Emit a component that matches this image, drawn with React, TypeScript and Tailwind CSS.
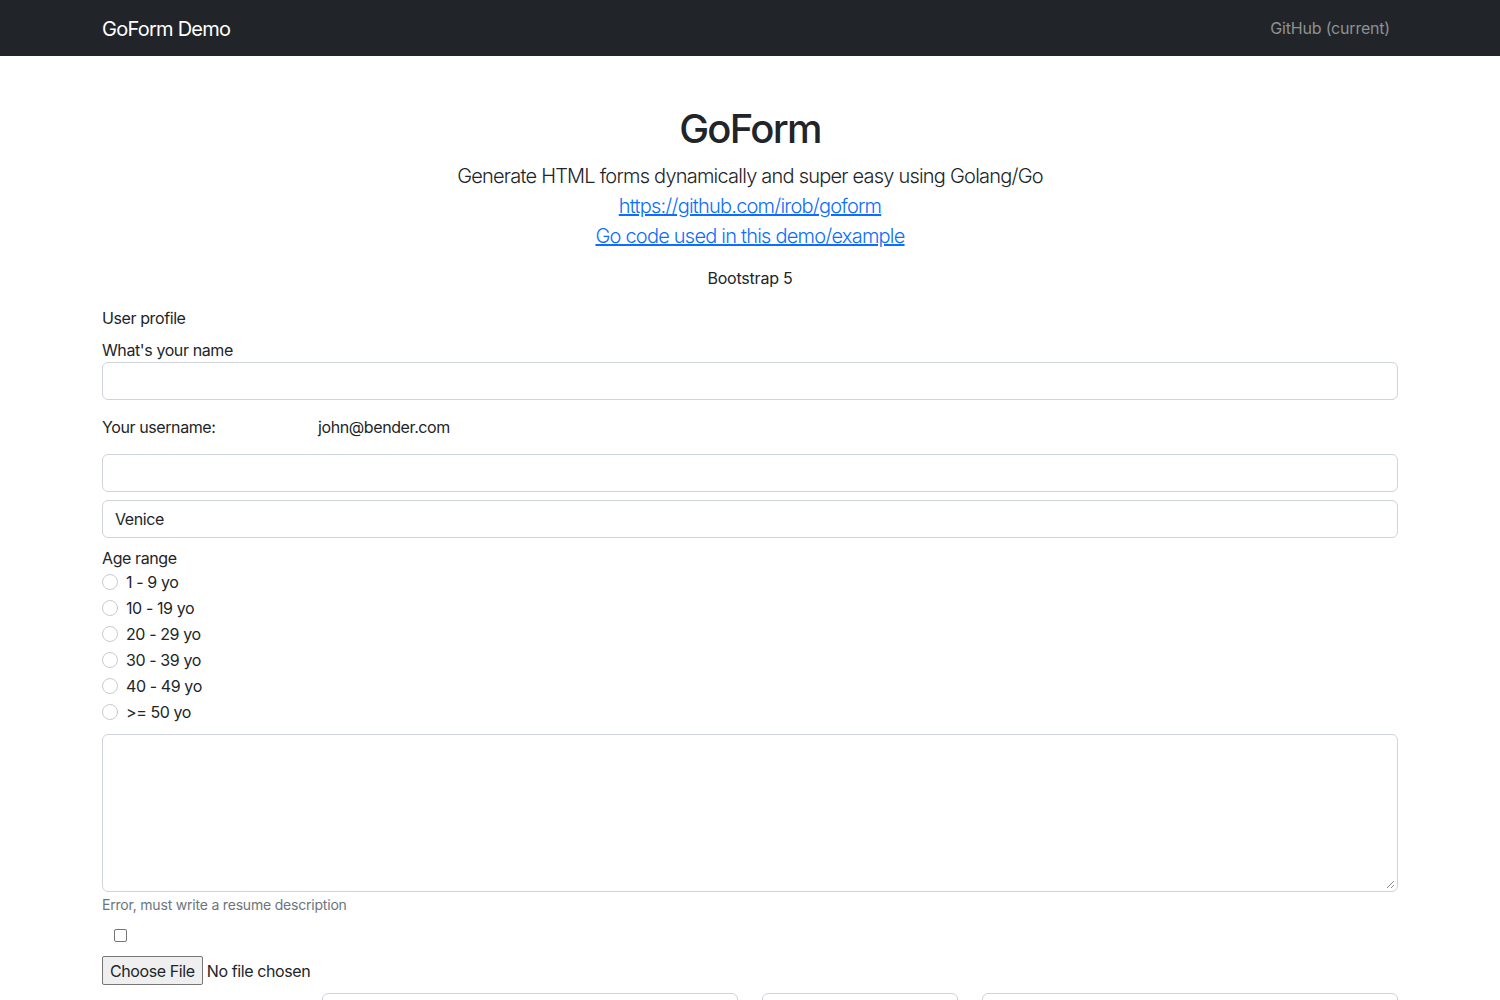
import React from "react";

const font = { fontFamily: "Inter, 'Liberation Sans', sans-serif" };

function Radio({ label }: { label: string }) {
  return (
    <div className="flex items-center h-6 mb-[2px]">
      <span className="w-4 h-4 rounded-full border border-[#c9cbce] bg-white shrink-0" />
      <span className="ml-2 text-[16px] leading-6 text-[#212529]">{label}</span>
    </div>
  );
}

export default function App() {
  return (
    <div className="min-h-screen bg-white text-[#212529] tracking-[-0.4px]" style={font}>
      <nav className="h-14 bg-[#212529]">
        <div className="mx-auto w-[1296px] h-full flex items-center justify-between">
          <span className="mt-[2px] text-[20px] leading-[30px] text-white tracking-[-0.75px]">GoForm Demo</span>
          <span className="text-[16px] leading-6 text-[#8e9093] pr-2 tracking-[-0.2px]">GitHub (current)</span>
        </div>
      </nav>
      <div className="mx-auto w-[1296px]">
        <div className="pt-[49px] text-center">
          <h1 className="text-[40px] leading-[48px] font-medium mb-2 tracking-[-1.7px]">GoForm</h1>
          <div className="tracking-[-0.78px] text-[20px] leading-[30px] font-light">
            <p>Generate HTML forms dynamically and super easy using Golang/Go</p>
            <p>
              <a className="text-[#0d6efd] underline">https://github.com/irob/goform</a>
            </p>
            <p>
              <a className="text-[#0d6efd] underline">Go code used in this demo/example</a>
            </p>
          </div>
          <p className="mt-[15px] text-[16px] leading-6 tracking-[-0.2px]">Bootstrap 5</p>
        </div>
        <div className="mt-4 text-[16px] leading-6">User profile</div>
        <div className="mt-2 text-[16px] leading-6">What's your name</div>
        <div className="h-[38px] border border-[#ced4da] rounded-[6px]" />
        <div className="mt-[15px] flex text-[16px] leading-6">
          <span className="w-[216px]">Your username:</span>
          <span>john@bender.com</span>
        </div>
        <div className="mt-[15px] h-[38px] border border-[#ced4da] rounded-[6px]" />
        <div className="mt-2 h-[38px] border border-[#ced4da] rounded-[6px] flex items-center px-3 text-[16px]">
          Venice
        </div>
        <div className="mt-2 text-[16px] leading-6">Age range</div>
        <div className="flex flex-col">
          <Radio label="1 - 9 yo" />
          <Radio label="10 - 19 yo" />
          <Radio label="20 - 29 yo" />
          <Radio label="30 - 39 yo" />
          <Radio label="40 - 49 yo" />
          <Radio label=">= 50 yo" />
        </div>
        <div className="relative mt-2 h-[158px] border border-[#ced4da] rounded-[6px]">
          <svg className="absolute right-[2px] bottom-[2px]" width="9" height="9" viewBox="0 0 9 9">
            <line x1="8" y1="1" x2="1" y2="8" stroke="#8a8a8a" strokeWidth="1" />
            <line x1="8" y1="5" x2="5" y2="8" stroke="#8a8a8a" strokeWidth="1" />
          </svg>
        </div>
        <div className="mt-[2px] text-[14px] leading-[21px] text-[#6c757d] tracking-[-0.2px]">
          Error, must write a resume description
        </div>
        <div className="h-6 mt-2 flex items-center">
          <span className="ml-3 w-[13px] h-[13px] border border-[#767676] rounded-[2px] bg-white" />
        </div>
        <div className="mt-[9px] flex items-center h-[29px]">
          <span className="h-[29px] px-[7px] flex items-center border border-[#767676] rounded-[2px] bg-[#efefef] text-[16px]">
            Choose File
          </span>
          <span className="ml-[4px] text-[16px]">No file chosen</span>
        </div>
        <div className="mt-2 flex">
          <div className="w-[220px] pt-[3px] text-[16px] leading-6">Full address</div>
          <div className="w-[416px] h-[38px] border border-[#ced4da] rounded-[6px]" />
          <div className="w-[24px]" />
          <div className="w-[196px] h-[38px] border border-[#ced4da] rounded-[6px]" />
          <div className="w-[24px]" />
          <div className="w-[416px] h-[38px] border border-[#ced4da] rounded-[6px]" />
        </div>
      </div>
    </div>
  );
}
